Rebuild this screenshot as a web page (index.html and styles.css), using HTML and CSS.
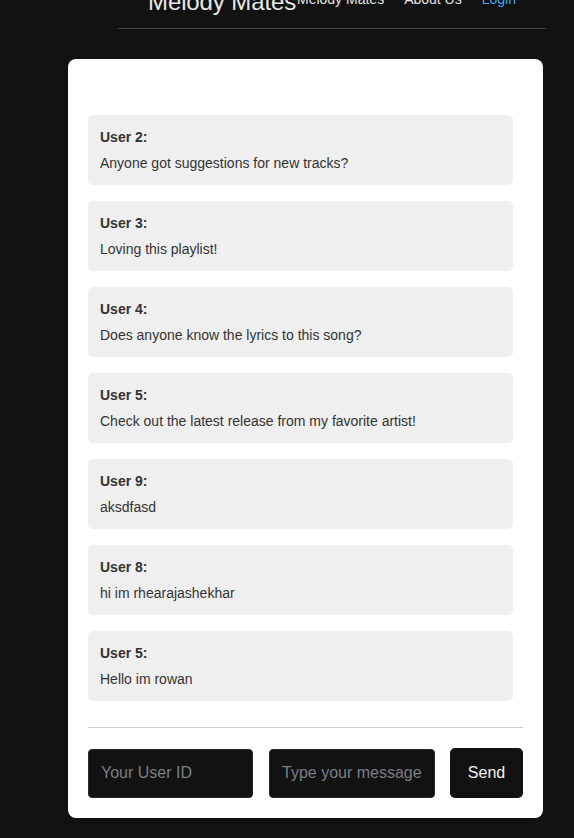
FILE: index.html
```html
<!DOCTYPE html>
<html>
<head>
<meta charset="utf-8">
<link rel="stylesheet" href="styles.css">
</head>
<body>
<header class="header">
  <h1 class="brand">Melody Mates</h1>
  <nav class="nav">
    <a class="nav-link" href="#">Melody Mates</a>
    <a class="nav-link" href="#">About Us</a>
    <a class="nav-link login" href="#">Login</a>
  </nav>
</header>
<main class="card">
  <div class="messages">
    <div class="msg"><div class="msg-user">User 2:</div><div class="msg-text">Anyone got suggestions for new tracks?</div></div>
    <div class="msg"><div class="msg-user">User 3:</div><div class="msg-text">Loving this playlist!</div></div>
    <div class="msg"><div class="msg-user">User 4:</div><div class="msg-text">Does anyone know the lyrics to this song?</div></div>
    <div class="msg"><div class="msg-user">User 5:</div><div class="msg-text">Check out the latest release from my favorite artist!</div></div>
    <div class="msg"><div class="msg-user">User 9:</div><div class="msg-text">aksdfasd</div></div>
    <div class="msg"><div class="msg-user">User 8:</div><div class="msg-text">hi im rhearajashekhar</div></div>
    <div class="msg"><div class="msg-user">User 5:</div><div class="msg-text">Hello im rowan</div></div>
  </div>
  <form class="composer">
    <input class="field field-id" type="text" placeholder="Your User ID">
    <input class="field field-msg" type="text" placeholder="Type your message">
    <button class="send" type="button">Send</button>
  </form>
</main>
</body>
</html>
```
FILE: styles.css
```css
html, body {
  margin: 0;
  padding: 0;
  background: #121212;
  font-family: "Liberation Sans", Arial, sans-serif;
  height: 838px;
  overflow: hidden;
}

.header {
  margin: -24px 0 0 118px;
  width: 428px;
  box-sizing: border-box;
  padding: 12px 30px;
  border-bottom: 1px solid #454545;
  display: flex;
  align-items: center;
  justify-content: space-between;
}

.brand {
  margin: 0;
  font-size: 24px;
  font-weight: normal;
  line-height: 28px;
  color: #e8e8e8;
  letter-spacing: -0.1px;
}

.nav {
  display: flex;
  gap: 20px;
  margin-top: -6px;
}

.nav-link {
  font-size: 14px;
  line-height: 16px;
  color: #e6e6e6;
  text-decoration: none;
}

.nav-link.login {
  color: #3ea6f2;
}

.card {
  margin: 30px 0 0 68px;
  width: 475px;
  box-sizing: border-box;
  background: #fff;
  border-radius: 8px;
  padding: 56px 20px 20px 20px;
}

.messages {
  display: flex;
  flex-direction: column;
  gap: 16px;
  margin-right: 10px;
  padding-bottom: 26px;
  border-bottom: 1px solid #cccccc;
  margin-right: 0;
}

.msg {
  background: #efefef;
  border-radius: 5px;
  padding: 14px 12px;
  margin-right: 10px;
  color: #333;
  font-size: 14px;
  line-height: 16px;
}

.msg-user {
  font-weight: bold;
  margin-bottom: 10px;
}

.composer {
  display: flex;
  align-items: center;
  margin: 20px 0 0 0;
}

.field {
  height: 49px;
  box-sizing: border-box;
  background: #121212;
  border: 1px solid #2a2a2a;
  border-radius: 4px;
  padding: 0 12px;
  color: #eee;
  font-family: "Liberation Sans", Arial, sans-serif;
  font-size: 16px;
  outline: none;
}

.field::placeholder {
  color: #7b7f86;
}

.field-id {
  width: 165px;
  margin-right: 16px;
}

.field-msg {
  width: 166px;
  margin-right: 15px;
}

.send {
  width: 73px;
  height: 50px;
  background: #121212;
  border: none;
  border-radius: 5px;
  color: #f2f2f2;
  font-family: "Liberation Sans", Arial, sans-serif;
  font-size: 16px;
  font-weight: 500;
  padding: 0;
}
```
